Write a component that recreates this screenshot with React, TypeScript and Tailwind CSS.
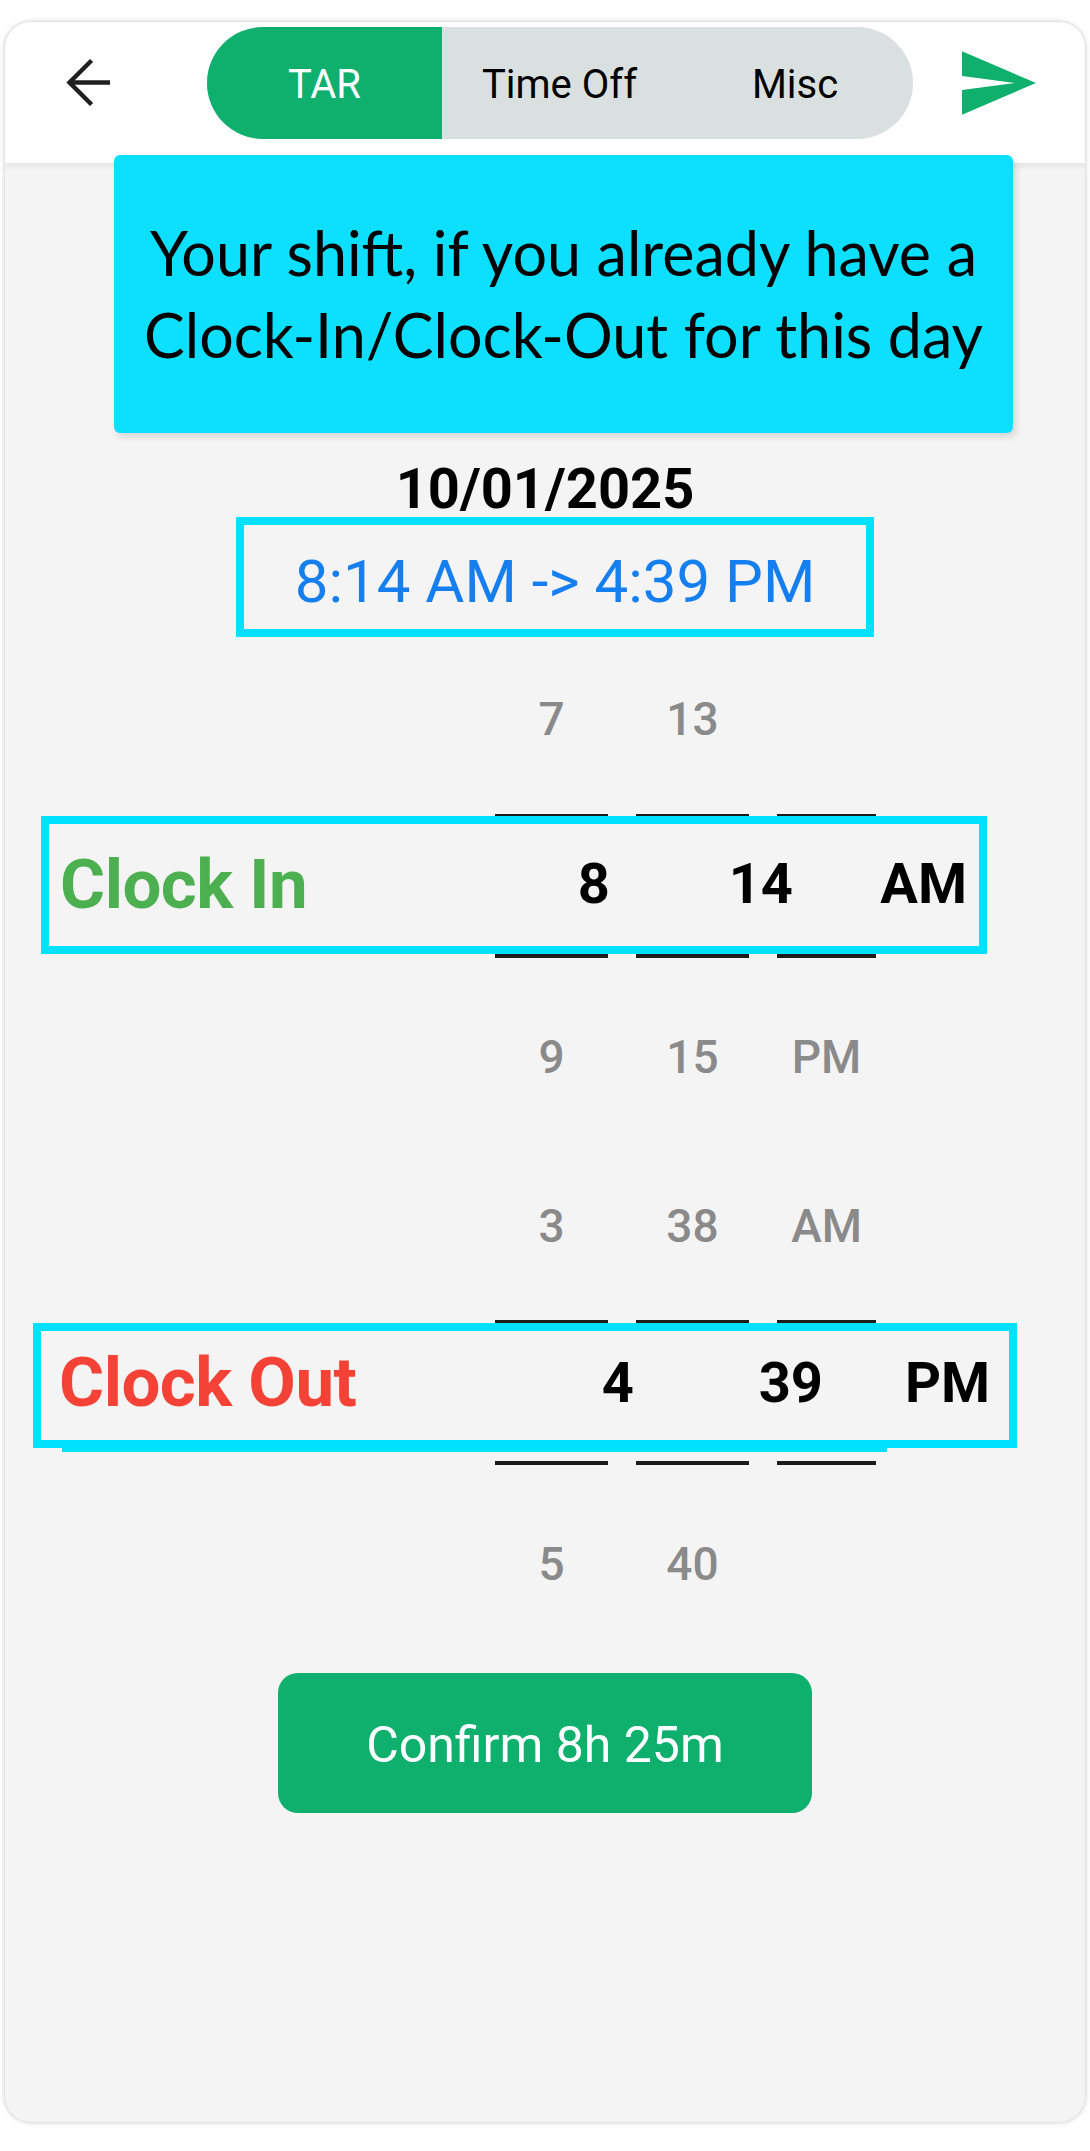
import React from "react";

const ROBOTO = { fontFamily: "Roboto, 'Liberation Sans', sans-serif" };

function GrayRow({ a, b, c }: { a: string; b: string; c: string }) {
  return (
    <div className="flex h-[169px] items-center pl-[490px] text-[46px] font-medium leading-none text-[#8a8a8a]">
      <div className="w-[113px] text-center">{a}</div>
      <div className="ml-[28px] w-[113px] text-center">{b}</div>
      <div className="ml-[28px] w-[99px] text-center">{c}</div>
    </div>
  );
}

function Picker({
  label,
  labelColor,
  top,
  bottom,
  sel,
  variant,
}: {
  label: string;
  labelColor: string;
  top: [string, string, string];
  bottom: [string, string, string];
  sel: [string, string, string];
  variant: 1 | 2;
}) {
  const v1 = variant === 1;
  return (
    <div className="flex flex-col" style={ROBOTO}>
      <GrayRow a={top[0]} b={top[1]} c={top[2]} />
      <div className="relative h-[169px]">
        <div className={`flex pl-[490px] ${v1 ? "pt-[11px]" : "pt-[10px]"}`}>
          <div className={`w-[113px] border-y-[4px] border-[#1c1c1c] ${v1 ? "h-[144px]" : "h-[145px]"}`} />
          <div className={`ml-[28px] w-[113px] border-y-[4px] border-[#1c1c1c] ${v1 ? "h-[144px]" : "h-[145px]"}`} />
          <div className={`ml-[28px] w-[99px] border-y-[4px] border-[#1c1c1c] ${v1 ? "h-[144px]" : "h-[145px]"}`} />
        </div>
        {!v1 && <div className="absolute left-[57px] top-[138px] h-[4px] w-[825px] bg-[#00e1ff]" />}
        <div
          className={`absolute top-[13px] flex items-center border-[8px] border-[#00e1ff] bg-[#f4f4f4] ${
            v1 ? "left-[36px] h-[138px] w-[946px] pb-[2px] pl-[11px] pr-[12px]" : "left-[28px] h-[125px] w-[984px] pb-[6px] pl-[18px] pr-[19px]"
          }`}
        >
          <div className="text-[69px] font-bold leading-none tracking-[-0.5px]" style={{ color: labelColor }}>
            {label}
          </div>
          <div className="flex-1" />
          <div className="flex text-[56px] font-bold leading-none text-black">
            <div className="w-[100px] text-right">{sel[0]}</div>
            <div className={`${v1 ? "w-[183px]" : "w-[189px]"} text-right`}>{sel[1]}</div>
            <div className={`${v1 ? "w-[174px]" : "w-[167px]"} text-right`}>{sel[2]}</div>
          </div>
        </div>
      </div>
      <GrayRow a={bottom[0]} b={bottom[1]} c={bottom[2]} />
    </div>
  );
}

export default function App() {
  return (
    <div className="min-h-[2151px] w-full bg-white pt-[22px]" style={ROBOTO}>
      <div className="mx-[5px] flex h-[2100px] flex-col overflow-hidden rounded-[26px] bg-[#f4f4f4] shadow-[0_0_5px_rgba(0,0,0,0.25)]">
        {/* Header */}
        <div className="relative z-10 flex h-[141px] shrink-0 items-start bg-white pt-[5px] shadow-[0_3px_6px_rgba(0,0,0,0.08)]">
          <div className="flex h-[112px] items-center pl-[55px]">
            <svg width="50" height="50" viewBox="0 0 50 50" fill="none">
              <path d="M52 24.5H10" stroke="#1f1f1f" strokeWidth="4.4" />
              <path d="M30 4L9.5 24.5L30 45" stroke="#1f1f1f" strokeWidth="4.4" strokeLinecap="square" />
            </svg>
          </div>
          <div className="ml-[97px] flex h-[112px] w-[706px] overflow-hidden rounded-full bg-[#dadfdf] pt-[3px] text-[40px] leading-none">
            <div className="-mt-[3px] flex w-[235px] items-center justify-center bg-[#0fb06e] pt-[3px] text-white">TAR</div>
            <div className="flex w-[235px] items-center justify-center text-black">Time Off</div>
            <div className="flex w-[236px] items-center justify-center text-black">Misc</div>
          </div>
          <div className="ml-[49px] flex h-[112px] items-center">
            <svg width="74" height="64" viewBox="2 3 21 18">
              <path d="M2.01 21L23 12 2.01 3 2 10l15 2-15 2z" fill="#0fb06e" />
            </svg>
          </div>
        </div>

        {/* Callout */}
        <div
          className="relative z-20 -mt-[8px] ml-[109px] flex h-[278px] w-[899px] shrink-0 items-center justify-center rounded-[6px] bg-[#0de0fe] text-center text-[61px] leading-[82px] text-black shadow-[3px_4px_6px_rgba(0,0,0,0.12)]"
          style={{ fontFamily: "Lato, 'Open Sans', sans-serif" }}
        >
          <div className="whitespace-nowrap">
            Your shift, if you already have a
            <br />
            Clock-In/Clock-Out for this day
          </div>
        </div>

        {/* Date */}
        <div className="mt-[28px] text-center text-[56px] font-bold leading-[56px] text-black">10/01/2025</div>

        {/* Time range */}
        <div className="ml-[231px] h-[120px] w-[638px] border-[8px] border-[#00e1ff] pt-[22px] text-center text-[60px] leading-[70px] text-[#157ff0]">
          8:14 AM -&gt; 4:39 PM
        </div>

        <div className="-mt-[3px]">
          <Picker
            label="Clock In"
            labelColor="#4caf50"
            top={["7", "13", ""]}
            bottom={["9", "15", "PM"]}
            sel={["8", "14", "AM"]}
            variant={1}
          />
          <Picker
            label="Clock Out"
            labelColor="#f44336"
            top={["3", "38", "AM"]}
            bottom={["5", "40", ""]}
            sel={["4", "39", "PM"]}
            variant={2}
          />
        </div>

        <div className="mx-auto mt-[25px] flex h-[140px] w-[534px] items-center justify-center rounded-[20px] bg-[#0fb06e] pt-[4px] text-[50px] leading-none text-white">
          Confirm 8h 25m
        </div>
      </div>
    </div>
  );
}
